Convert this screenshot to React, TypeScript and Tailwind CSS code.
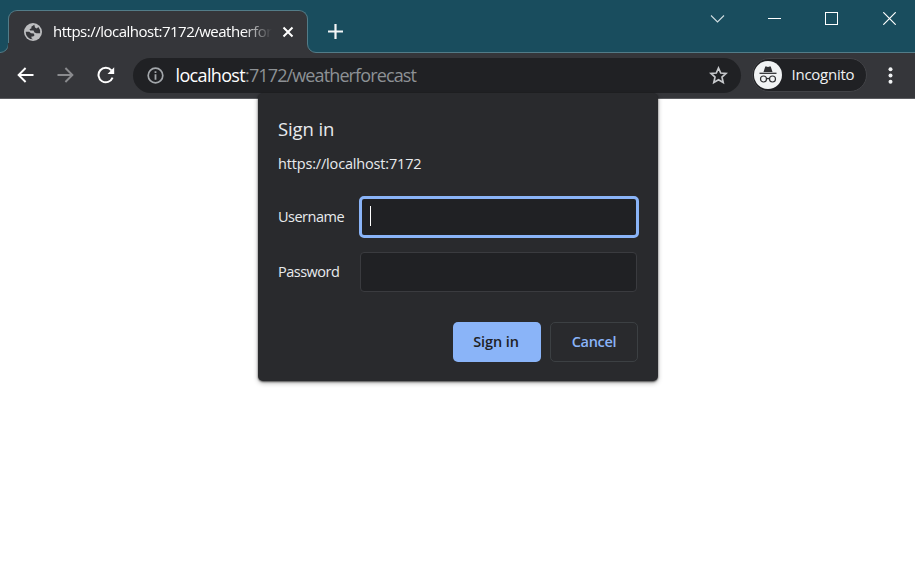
import React from 'react';

function TabStrip() {
  return (
    <header className="flex h-[53px] items-end bg-[#194d5e] text-white">
      <svg className="-mr-px h-[10px] w-[9px] shrink-0" viewBox="0 0 9 10">
        <path d="M9 0H8.5V1A8.5 8.5 0 0 1 0 9.5V10H9Z" fill="#35363a" />
        <path d="M8.5 0V1A8.5 8.5 0 0 1 0 9.5" fill="none" stroke="#537c88" />
      </svg>
      <div className="flex h-[43px] w-[300px] shrink-0 flex-col">
        <div className="flex h-[33px] items-center rounded-t-[9px] border border-b-0 border-[#537c88] bg-[#35363a] pt-[10px] pl-[14px]">
          <svg className="size-[20px] shrink-0" viewBox="0 0 20 20">
            <circle cx="10" cy="10" r="9" fill="#bdbec0" />
            <path d="M11.300 2.700L8.300 4.800L8.500 6.200L6.500 7.200L7.200 8.500H10.500L11.500 10.400L13.500 11.300L17.200 11.200A7.400 7.400 0 0 0 15.300 4.900L13.800 6.500L12 5.500Z" fill="#35363a" />
            <path d="M2.700 9.700H6.200L8 11.300L10.800 11.600L11.500 13.200L10.200 14.400L8.400 14.600L8.600 16.400L10.300 17.300A7.400 7.400 0 0 1 2.700 9.700Z" fill="#35363a" />
          </svg>
          <div className="ml-[10px] w-[219px] overflow-hidden pb-[2px] whitespace-nowrap font-['Open_Sans',sans-serif] text-[15px] leading-[20px] tracking-[-0.5px] [mask-image:linear-gradient(to_right,black_190px,transparent_219px)]">
            https://localhost:7172/weatherforecast
          </div>
          <svg className="ml-[10px] size-[12px] shrink-0" viewBox="0 0 12 12" fill="none" stroke="#fff" strokeWidth="2">
            <path d="M1.500 1.500L10.500 10.500M10.500 1.500L1.500 10.500" />
          </svg>
        </div>
        <div className="h-[10px] bg-[#35363a]" />
      </div>
      <svg className="-ml-px h-[10px] w-[10px] shrink-0" viewBox="0 0 10 10">
        <path d="M0 0H.5V1A8.5 8.5 0 0 0 9 9.500H10V10H0Z" fill="#35363a" />
        <path d="M.5 0V1A8.5 8.5 0 0 0 9 9.500H10" fill="none" stroke="#537c88" />
      </svg>
      <div className="flex h-[53px] flex-1 items-start border-b border-[#537c88]">
        <svg className="mt-[24px] ml-[11px] size-[15px]" viewBox="0 0 15 15" stroke="#f3f6f7" strokeWidth="2.2">
          <path d="M7.500 0V15M0 7.500H15" />
        </svg>
        <svg className="mt-[14px] ml-[367px] h-[10px] w-[15px]" viewBox="0 0 15 10" fill="none" stroke="#cfdde1" strokeWidth="1.1">
          <path d="M1 1.500L7.500 8L14 1.500" />
        </svg>
        <svg className="mt-[18px] ml-[43px] h-px w-[13px]" viewBox="0 0 13 1"><path d="M0 .5H13" stroke="#fff" /></svg>
        <svg className="mt-[12px] ml-[44px] size-[13px]" viewBox="0 0 13 13"><rect x=".5" y=".5" width="12" height="12" fill="none" stroke="#fff" /></svg>
        <svg className="mt-[12px] ml-[45px] size-[13px]" viewBox="0 0 13 13" stroke="#fff" strokeWidth="1.2"><path d="M.3.3L12.700 12.700M12.700.3L.3 12.700" /></svg>
      </div>
    </header>
  );
}

function Toolbar() {
  return (
    <nav className="flex h-[46px] items-start border-b border-[#5b5c60] bg-[#35363a] font-['Open_Sans',sans-serif]">
      <svg className="mt-[14px] ml-[17px] h-[16px] w-[17px]" viewBox="0 0 17 16" fill="none" stroke="#fff" strokeWidth="1.900">
        <path d="M16.500 8H1.800M8.600 1L1.600 8L8.600 15" />
      </svg>
      <svg className="mt-[14px] ml-[23px] h-[16px] w-[17px]" viewBox="0 0 17 16" fill="none" stroke="#8a8b8e" strokeWidth="1.900">
        <path d="M.5 8H15.200M8.400 1L15.400 8L8.400 15" />
      </svg>
      <svg className="mt-[13px] ml-[23px] size-[18px]" viewBox="0 0 18 18">
        <path d="M15.600 11.700A7.300 7.300 0 1 1 14.400 4.300" fill="none" stroke="#fff" strokeWidth="2" />
        <path d="M17.200 1.300V8H10.500Z" fill="#fff" />
      </svg>
      <div className="mt-[5px] ml-[18px] flex h-[35px] w-[608px] items-center rounded-full bg-[#202124] pl-[14px]">
        <svg className="size-[17px] shrink-0" viewBox="0 0 17 17">
          <circle cx="8.500" cy="8.500" r="7.300" fill="none" stroke="#a3a7ab" strokeWidth="1.700" />
          <path d="M8.500 4.200V6M8.500 7.300V12.700" stroke="#a3a7ab" strokeWidth="1.800" />
        </svg>
        <span className="ml-[11.500px] w-[529.500px] pb-[1px] whitespace-nowrap text-[18px] leading-[24px] tracking-[-0.88px] text-[#8d9195]">
          <span className="tracking-[-0.65px] text-white">localhost</span>:7172/weatherforecast
        </span>
        <svg className="ml-[3.500px] size-[19px] shrink-0" viewBox="0 0 19 19" fill="none" stroke="#c7c9cc" strokeWidth="1.700">
          <path d="M9.500 2L11.700 7L17 7.500L13 11.100L14.200 16.500L9.500 13.700L4.800 16.500L6 11.100L2 7.500L7.300 7Z" />
        </svg>
      </div>
      <div className="mt-[5px] ml-[11px] flex h-[34px] w-[115px] items-center rounded-full border border-[#424347] bg-[#202124] pl-px">
        <svg className="size-[28px] shrink-0" viewBox="0 0 28 28">
          <circle cx="14" cy="14" r="14" fill="#f1f3f4" />
          <path d="M9.500 11L11.200 5.800Q11.500 5.200 12.300 5.400L14 6L15.700 5.400Q16.500 5.200 16.800 5.800L18.500 11Z" fill="#303134" />
          <path d="M5.500 12.300H22.500" stroke="#303134" strokeWidth="1.300" />
          <g fill="none" stroke="#303134" strokeWidth="1.200">
            <circle cx="9.500" cy="18" r="3" /><circle cx="18.500" cy="18" r="3" />
            <path d="M12.500 18Q14 16.800 15.500 18" />
          </g>
        </svg>
        <span className="ml-[9.500px] pb-[2px] text-[15px] leading-[20px] tracking-[-0.25px] text-[#f0f1f2]">Incognito</span>
      </div>
      <svg className="mt-[14px] ml-[21px] h-[17px] w-[5px]" viewBox="0 0 5 17" fill="#f1f3f4">
        <circle cx="2.500" cy="2.300" r="2" /><circle cx="2.500" cy="8.500" r="2" /><circle cx="2.500" cy="14.700" r="2" />
      </svg>
    </nav>
  );
}

function SignInDialog() {
  return (
    <form className="absolute top-[93px] left-[258px] flex h-[288px] w-[400px] flex-col rounded-[5px] bg-[#292a2d] px-[20px] pt-[24px] font-['Open_Sans',sans-serif] text-[14.5px] leading-[20px] text-[#e8eaed] shadow-[0_1px_2px_rgba(0,0,0,0.6),0_2px_5px_rgba(0,0,0,0.3)]">
      <h1 className="h-[24px] text-[18.5px] leading-[24px] tracking-[-0.1px]">Sign in</h1>
      <p className="mt-[13px] h-[20px] tracking-[-0.17px]">https://localhost:7172</p>
      <label className="mt-[22px] flex h-[42px] items-center">
        <span className="w-[81px] shrink-0 tracking-[-0.5px]">Username</span>
        <span className="flex h-[42px] w-[280px] shrink-0 items-center rounded-[5px] border-[3px] border-[#8ab4f8] bg-[#202124] pl-[8px]">
          <span className="-mt-[2px] h-[20px] w-px bg-white" />
        </span>
      </label>
      <label className="mt-[14px] flex h-[40px] items-center">
        <span className="w-[82px] shrink-0 tracking-[-0.5px]">Password</span>
        <span className="h-[40px] w-[277px] shrink-0 rounded-[4px] border border-[#3a3b3f] bg-[#202124]" />
      </label>
      <div className="mt-[30px] flex gap-[9px] pl-[175px] font-semibold">
        <button type="button" className="h-[40px] w-[88px] shrink-0 rounded-[5px] bg-[#8ab4f8] pr-[8px] tracking-[-0.1px] text-[#202124]"><span className="pl-[6px]">Sign in</span></button>
        <button type="button" className="h-[40px] w-[88px] shrink-0 rounded-[5px] border border-[#3c4043] tracking-[-0.3px] text-[#8ab4f8]">Cancel</button>
      </div>
    </form>
  );
}

export default function App() {
  return (
    <main className="relative h-[568px] w-[915px] overflow-hidden bg-white">
      <TabStrip />
      <Toolbar />
      <SignInDialog />
    </main>
  );
}
